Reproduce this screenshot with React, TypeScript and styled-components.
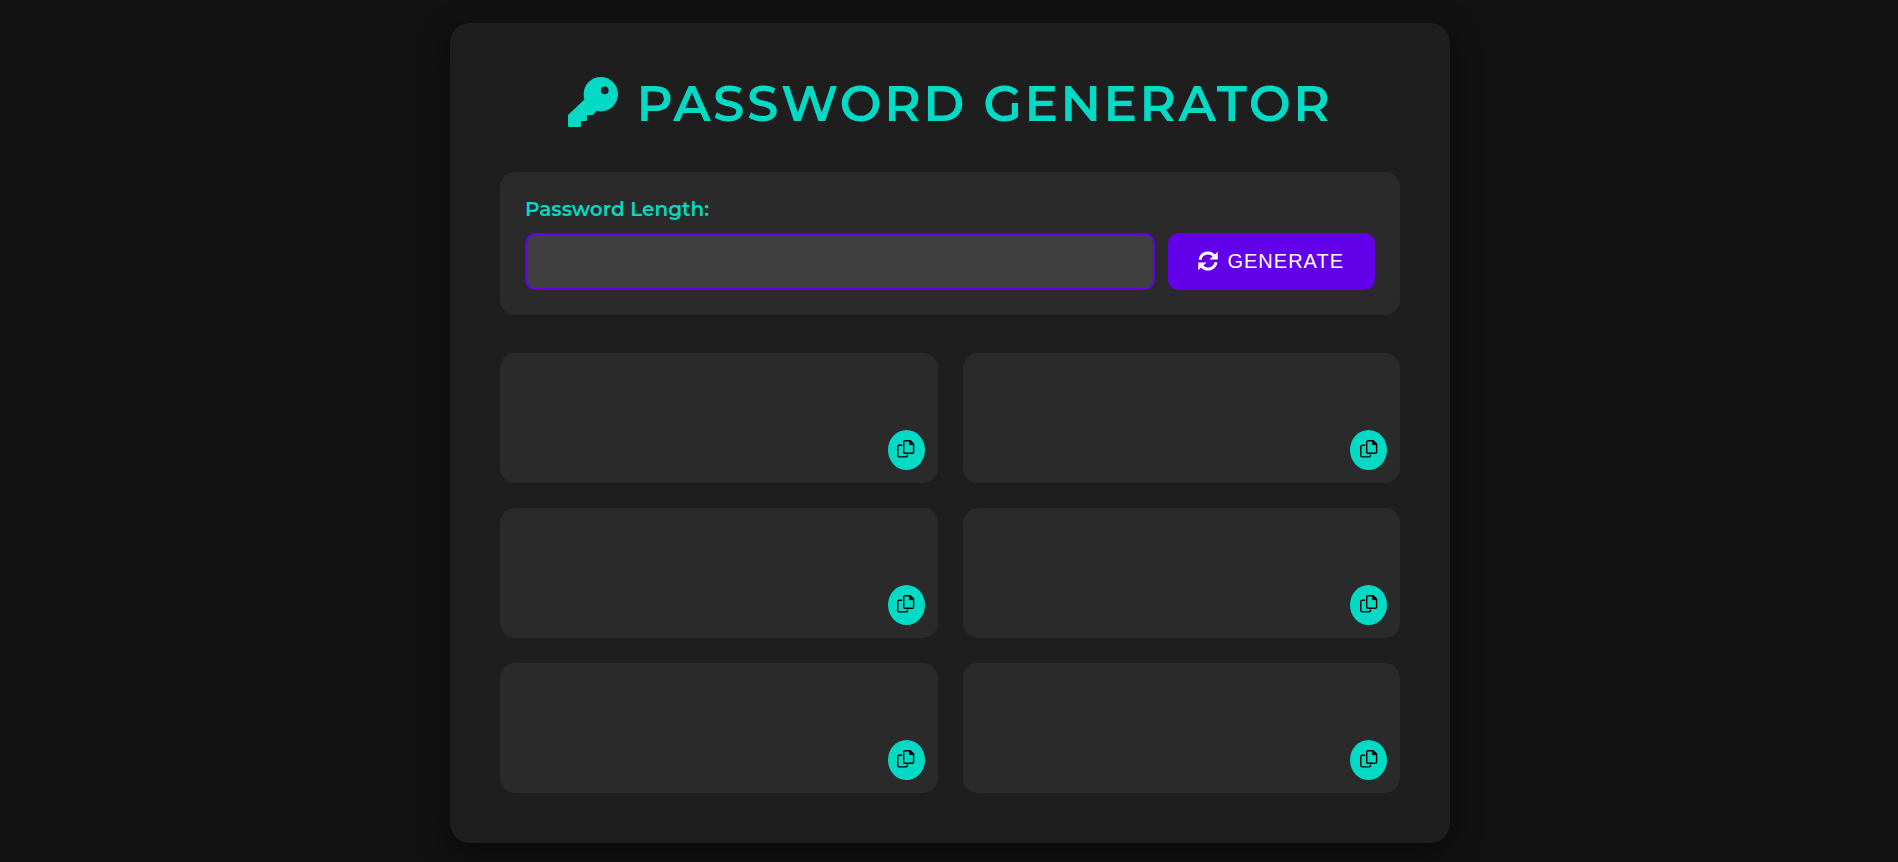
import React from "react";
import styled, { createGlobalStyle } from "styled-components";

const GlobalStyle = createGlobalStyle`
  * { box-sizing: border-box; }
  body {
    margin: 0;
    background: #121212;
    color: #ffffff;
    font-family: Montserrat, Inter, sans-serif;
  }
`;

const Page = styled.div`
  display: flex;
  justify-content: center;
  align-items: center;
  min-height: 100vh;
  padding: 23px 19px 19px 21px;
`;

const Panel = styled.main`
  width: 100%;
  max-width: 1000px;
  padding: 50px;
  border-radius: 20px;
  background: #1e1e1e;
  box-shadow: 0 10px 30px rgba(0, 0, 0, 0.5);
`;

const Title = styled.h1`
  display: flex;
  align-items: center;
  justify-content: center;
  gap: 19px;
  margin: 0 0 38px;
  color: #03dac6;
  font-size: 50px;
  font-weight: 600;
  line-height: 61px;
  letter-spacing: 0.05em;
  text-transform: uppercase;
`;

const TitleIcon = styled.svg`
  flex: none;
  width: 50px;
  height: 50px;
  margin-bottom: 3px;
`;

const Controls = styled.form`
  margin-bottom: 38px;
  padding: 25px;
  border-radius: 15px;
  background: #2a2a2a;
`;

const Label = styled.label`
  display: block;
  margin-bottom: 12px;
  color: #03dac6;
  font-size: 20px;
  font-weight: 600;
  line-height: 24px;
`;

const ControlRow = styled.div`
  display: flex;
  gap: 13px;
`;

const LengthInput = styled.input`
  flex: 1;
  min-width: 0;
  height: 57px;
  padding: 0 15px;
  border: 2px solid #6200ea;
  border-radius: 10px;
  outline: none;
  background: #3f3f3f;
  color: #ffffff;
  font-size: 20px;
`;

const GenerateButton = styled.button`
  display: flex;
  align-items: center;
  gap: 9px;
  height: 57px;
  padding: 0 31px 0 30px;
  border: 0;
  border-radius: 10px;
  background: #6200ea;
  color: #ffffff;
  font-family: "Liberation Sans", Arial, sans-serif;
  font-size: 20px;
  letter-spacing: 1px;
  text-transform: uppercase;
  cursor: pointer;
`;

const ButtonIcon = styled.svg`
  flex: none;
  width: 20px;
  height: 20px;
  margin-bottom: 2px;
`;

const PasswordGrid = styled.section`
  display: grid;
  grid-template-columns: repeat(2, 1fr);
  gap: 25px;
`;

const PasswordCard = styled.article`
  display: flex;
  align-items: flex-end;
  justify-content: flex-end;
  min-height: 130px;
  padding: 13px;
  border-radius: 15px;
  background: #2a2a2a;
`;

const PasswordText = styled.output`
  flex: 1;
  align-self: stretch;
  overflow-wrap: anywhere;
  font-size: 20px;
`;

const CopyButton = styled.button`
  display: flex;
  align-items: center;
  justify-content: center;
  width: 37px;
  height: 40px;
  padding: 0 0 3px;
  border: 0;
  border-radius: 50%;
  background: #03dac6;
  color: #000000;
  cursor: pointer;
`;

const KeyIcon = () => (
  <TitleIcon viewBox="0 0 512 512" fill="currentColor" aria-hidden="true">
    <path d="M336 352c97.2 0 176-78.8 176-176S433.2 0 336 0S160 78.8 160 176c0 18.7 2.9 36.6 8.3 53.5L0 388V502Q0 512 10 512H122Q132 512 132 502V450H184Q194 450 194 440V388H256l37.5-41.5c13.7 3.6 28 5.5 42.5 5.5zM376 96a40 40 0 1 1 0 80 40 40 0 1 1 0-80z" />
  </TitleIcon>
);

const RefreshIcon = () => (
  <ButtonIcon viewBox="0 0 20 20" aria-hidden="true">
    <g fill="none" stroke="currentColor" strokeWidth="3">
      <path d="M2 8.7A8 8 0 0 1 16 4.8" />
      <path d="M18 11.3A8 8 0 0 1 4 15.2" />
    </g>
    <path d="M19.8 .7v7.9h-8.4zM.2 19.3v-7.9h8.4z" fill="currentColor" />
  </ButtonIcon>
);

const CopyIcon = () => (
  <svg width="18" height="18" viewBox="0 0 18 18" fill="none" stroke="currentColor" strokeWidth="1.4" aria-hidden="true">
    <path d="M8.1 .7h5.2l3.3 3.3v7.9a1.4 1.4 0 0 1-1.4 1.4H8.1A1.4 1.4 0 0 1 6.7 11.9V2.1A1.4 1.4 0 0 1 8.1 .7z" />
    <path d="M12.4 .6v4.1h4.5z" fill="currentColor" strokeWidth="0.6" stroke="currentColor" />
    <path d="M5.1 5.3H2.2a1.4 1.4 0 0 0-1.4 1.4v8.8a1.4 1.4 0 0 0 1.4 1.4h6.9a1.4 1.4 0 0 0 1.4-1.4v-.9" />
  </svg>
);

const slots = [1, 2, 3, 4, 5, 6];

export default function App() {
  return (
    <>
      <GlobalStyle />
      <Page>
        <Panel>
          <Title>
            <KeyIcon />
            <span>Password Generator</span>
          </Title>
          <Controls onSubmit={(event) => event.preventDefault()}>
            <Label htmlFor="length">Password Length:</Label>
            <ControlRow>
              <LengthInput id="length" type="number" />
              <GenerateButton type="submit">
                <RefreshIcon />
                <span>Generate</span>
              </GenerateButton>
            </ControlRow>
          </Controls>
          <PasswordGrid>
            {slots.map((slot) => (
              <PasswordCard key={slot}>
                <PasswordText />
                <CopyButton type="button" aria-label={`Copy password ${slot}`}>
                  <CopyIcon />
                </CopyButton>
              </PasswordCard>
            ))}
          </PasswordGrid>
        </Panel>
      </Page>
    </>
  );
}
